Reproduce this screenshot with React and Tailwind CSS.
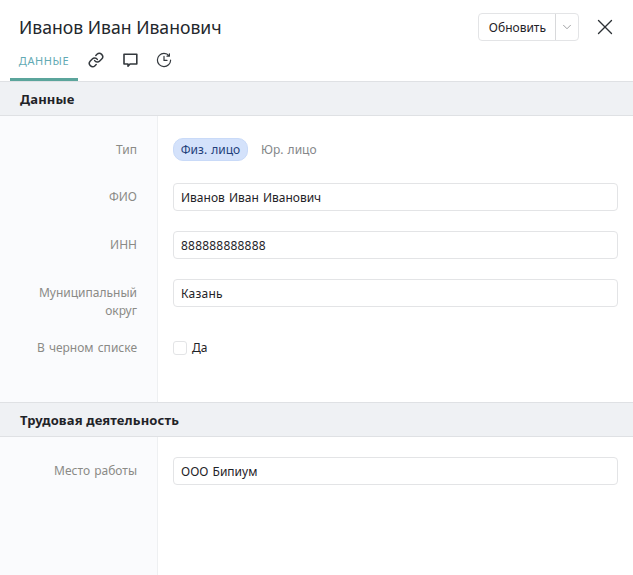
import { Link, ChevronDown, X } from "lucide-react";

const leftColumn = "bg-[linear-gradient(to_right,#fafbfd_157px,#eef0f2_157px,#eef0f2_158px,#fff_158px)]";

function Row({ label, children, className = "" }) {
  return (
    <div className={`flex ${className}`}>
      <div className="w-[157px] shrink-0 pr-5 pl-5 text-right text-[12px] leading-[18px] text-[#8a8a86] [word-spacing:1px]">{label}</div>
      <div className="flex-1 pr-[15px] pl-4">{children}</div>
    </div>
  );
}

function Field({ value, className = "" }) {
  return (
    <div className={`h-7 rounded border border-[#e3e4e6] bg-white px-[7px] text-[12px] leading-[27px] text-[#1f2328] [word-spacing:1px] ${className}`}>{value}</div>
  );
}

function SectionHead({ title }) {
  return (
    <div className="h-[35px] border-y border-[#dfe1e4] bg-[#eff1f4] pl-5 text-[13px] font-bold leading-[35px] tracking-[0.15px] text-[#1f2328]">{title}</div>
  );
}

export default function App() {
  return (
    <div className="flex h-[575px] w-[633px] flex-col overflow-hidden bg-white font-['Noto_Sans',sans-serif]">
      <div className="flex h-[44px] items-center justify-between pt-[9px] pr-[15px] pl-[19px]">
        <h1 className="text-[17.6px] leading-[26px] text-[#24282c]">Иванов Иван Иванович</h1>
        <div className="flex items-center gap-[13px]">
          <div className="flex h-7 rounded border border-[#e3e4e6] text-[#1f2328]">
            <div className="border-r border-[#d8d9db] pr-[9px] pl-[10px] text-[12px] leading-[27px]">Обновить</div>
            <div className="flex w-[22px] items-center justify-center text-[#7d7f82]"><ChevronDown size={14} strokeWidth={1.25} /></div>
          </div>
          <X size={26} strokeWidth={1.25} className="text-[#2c3135]" />
        </div>
      </div>
      <div className="flex h-[37px] pl-[10px]">
        <div className="h-[37px] w-[68px] border-b-[3px] border-[#5ba59c] pt-[8px] text-center text-[11px] leading-[18px] tracking-[0.6px] text-[#62aab4]">ДАННЫЕ</div>
        <div className="flex gap-[19px] pt-[8px] pl-[10px] text-[#33383d]">
          <Link size={16} strokeWidth={2.25} />
          <svg width="15" height="16" viewBox="0 0 15 16" fill="none" stroke="currentColor" strokeWidth="1.6">
            <path d="M1 2.2H13.8V12H7L5 14.2V12H1Z" strokeLinejoin="round" />
          </svg>
          <svg width="16" height="16" viewBox="0 0 16 16" className="-ml-[1px]" fill="none" stroke="currentColor" strokeWidth="1.2" strokeLinecap="round" strokeLinejoin="round">
            <path d="M14.6 8.2A6.6 6.6 0 1 1 8 1.4C10.2 1.4 12 2.4 13.2 4M13.4 1.8V4.2H11" />
            <path d="M8 4.4V8.4H11" />
          </svg>
        </div>
      </div>
      <SectionHead title="Данные" />
      <div className={`flex h-[286px] flex-col pt-[22px] ${leftColumn}`}>
        <Row label={<span className="leading-[23px]">Тип</span>} className="h-[45px]">
          <div className="flex items-center text-[12px] [word-spacing:1px]">
            <span className="h-[23px] w-[75px] rounded-[10px] border border-[#c9daf8] bg-[#d4e2fb] text-center leading-[21px] text-[#1f3f7a]">Физ. лицо</span>
            <span className="ml-[13px] leading-[23px] text-[#85878a]">Юр. лицо</span>
          </div>
        </Row>
        <Row label={<span className="block pt-[5px]">ФИО</span>} className="h-[48px]"><Field value="Иванов Иван Иванович" /></Row>
        <Row label={<span className="block pt-[5px]">ИНН</span>} className="h-[48px]"><Field value="888888888888" className="tracking-[0.2px]" /></Row>
        <Row label={<span className="block pt-[5px]">Муниципальный<br />округ</span>} className="h-[60px]"><Field value="Казань" className="tracking-[0.2px]" /></Row>
        <Row label="В черном списке">
          <div className="flex items-center gap-[5px] text-[12px] leading-[18px] text-[#1f2328]">
            <span className="h-[14px] w-[14px] rounded-[3px] border border-[#e3e4e6] bg-white" />
            Да
          </div>
        </Row>
      </div>
      <SectionHead title="Трудовая деятельность" />
      <div className={`flex-1 pt-[20px] ${leftColumn}`}>
        <Row label={<span className="block pt-[5px]">Место работы</span>}><Field value="ООО Бипиум" /></Row>
      </div>
    </div>
  );
}
